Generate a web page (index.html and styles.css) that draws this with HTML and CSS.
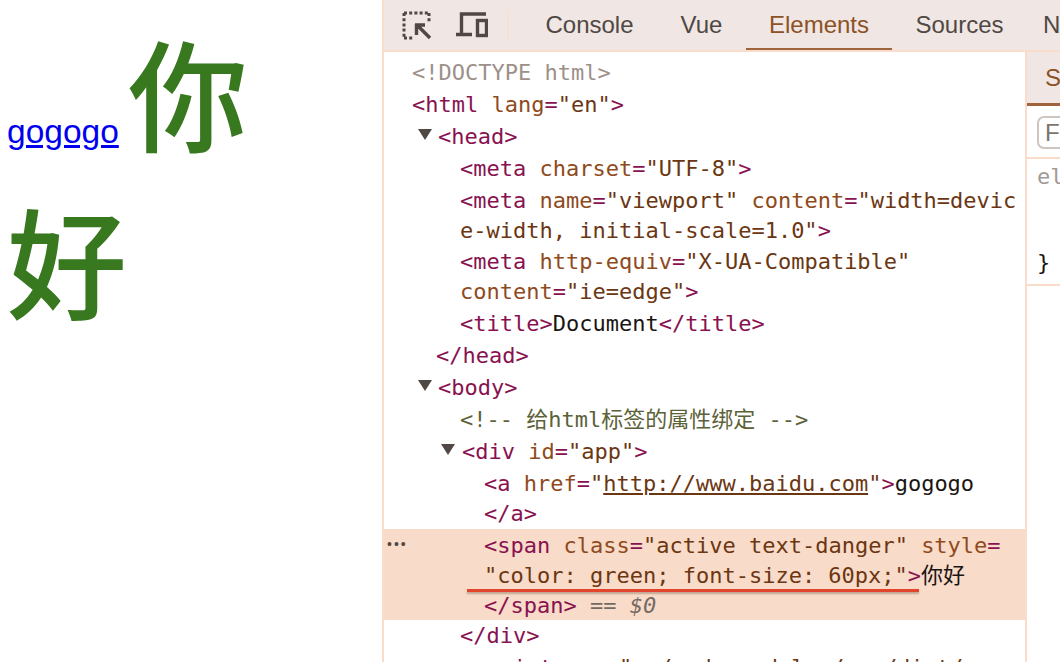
FILE: index.html
```html
<!DOCTYPE html>
<html lang="zh-CN">
<head>
<meta charset="UTF-8">
<title>Document</title>
<link rel="stylesheet" href="styles.css">
</head>
<body>
<main class="page"><a class="link" href="#">gogogo</a> <span class="big">你好</span></main>
<section class="devtools">
  <header class="toolbar">
    <svg class="tool tool-inspect" width="30" height="30" viewBox="0 0 30 30" fill="none" stroke="#4f4844">
      <path d="M2 3h25M2 3v25M27 3v9M2 28h9" stroke-width="3" stroke-dasharray="3 2.200"/>
      <path d="M13 15h10M14.500 14v11M15 15l13 13" stroke-width="3.400"/>
    </svg>
    <svg class="tool tool-device" width="32" height="26" viewBox="0 0 32 26" fill="none" stroke="#4f4844" stroke-width="3.400">
      <path d="M30 2H5.500v20M0 22.500h16"/>
      <rect x="21.500" y="8.500" width="9" height="15"/>
    </svg>
    <span class="divider"></span>
    <nav class="tabs">
      <span class="tab tab-console">Console</span>
      <span class="tab tab-vue">Vue</span>
      <span class="tab tab-elements">Elements</span>
      <span class="tab tab-sources">Sources</span>
      <span class="tab tab-network">Network</span>
    </nav>
  </header>
  <div class="panes">
    <div class="dom">
      <div class="row r32 i0"><span class="dt">&lt;!DOCTYPE html&gt;</span></div>
      <div class="row r32 i0"><span class="t">&lt;html</span> <span class="a">lang</span><span class="t">=</span><span class="v">"en"</span><span class="t">&gt;</span></div>
      <div class="row r32 i1"><i class="arrow"></i><span class="t">&lt;head&gt;</span></div>
      <div class="row r32 i2"><span class="t">&lt;meta</span> <span class="a">charset</span><span class="t">=</span><span class="v">"UTF-8"</span><span class="t">&gt;</span></div>
      <div class="row r30 i2"><span class="t">&lt;meta</span> <span class="a">name</span><span class="t">=</span><span class="v">"viewport"</span> <span class="a">content</span><span class="t">=</span><span class="v">"width=devic</span></div>
      <div class="row r31 i2"><span class="v">e-width, initial-scale=1.0"</span><span class="t">&gt;</span></div>
      <div class="row r30 i2"><span class="t">&lt;meta</span> <span class="a">http-equiv</span><span class="t">=</span><span class="v">"X-UA-Compatible"</span></div>
      <div class="row r32 i2"><span class="a">content</span><span class="t">=</span><span class="v">"ie=edge"</span><span class="t">&gt;</span></div>
      <div class="row r32 i2"><span class="t">&lt;title&gt;</span>Document<span class="t">&lt;/title&gt;</span></div>
      <div class="row r32 i1b"><span class="t">&lt;/head&gt;</span></div>
      <div class="row r32 i1"><i class="arrow"></i><span class="t">&lt;body&gt;</span></div>
      <div class="row r32 i2"><span class="c">&lt;!-- 给html标签的属性绑定 --&gt;</span></div>
      <div class="row r32 i2 has-arrow"><i class="arrow"></i><span class="t">&lt;div</span> <span class="a">id</span><span class="t">=</span><span class="v">"app"</span><span class="t">&gt;</span></div>
      <div class="row r30 i3"><span class="t">&lt;a</span> <span class="a">href</span><span class="t">=</span><span class="v">"<u>http://www.baidu.com</u>"</span><span class="t">&gt;</span>gogogo</div>
      <div class="row r30 i3"><span class="t">&lt;/a&gt;</span></div>
      <div class="selected">
        <span class="dots">•••</span>
        <div class="row r30 i3"><span class="t">&lt;span</span> <span class="a">class</span><span class="t">=</span><span class="v">"active text-danger"</span> <span class="a">style</span><span class="t">=</span></div>
        <div class="row r30 i3"><span class="v">"color: green; font-size: 60px;"</span><span class="t">&gt;</span>你好</div>
        <div class="row r30 i3"><span class="t">&lt;/span&gt;</span> <span class="eq">==</span> <em class="eq">$0</em></div>
        <span class="mark"></span>
      </div>
      <div class="row r32 i2"><span class="t">&lt;/div&gt;</span></div>
      <div class="row r32 i2"><span class="t">&lt;script</span> <span class="a">src</span><span class="t">=</span><span class="v">"<u>../node_modules/vue/dist/v</u></span></div>
    </div>
    <aside class="side">
      <div class="side-tabs"><span class="side-tab">Styles</span></div>
      <div class="filter"><span class="filter-box">Filter</span></div>
      <div class="rule">
        <div class="sel">element.style {</div>
        <div class="close">}</div>
      </div>
    </aside>
  </div>
</section>
</body>
</html>
```
FILE: styles.css
```css
* { box-sizing: border-box; }
html, body { margin: 0; height: 100%; overflow: hidden; }
body { display: flex; width: 1060px; height: 662px; background: #fff; }

.page {
  width: 382px;
  flex: none;
  padding: 0 120px 0 7px;
  font-family: "Liberation Sans", Arial, sans-serif;
  font-size: 33.500px;
  line-height: 1;
  margin-top: 7px;
}
.link { color: #0000ee; text-decoration: underline; }
.big {
  color: #38781f;
  font-size: 120px;
  line-height: 168px;
  font-weight: 500;
  font-family: "Noto Sans CJK SC", sans-serif;
}

.devtools {
  flex: 1;
  min-width: 0;
  border-left: 2px solid #fadccb;
  display: flex;
  flex-direction: column;
}
.toolbar {
  height: 52px;
  flex: none;
  background: #f0e6e3;
  border-bottom: 2px solid #fadccb;
  display: flex;
  align-items: center;
  overflow: hidden;
  font-family: "Liberation Sans", Arial, sans-serif;
  font-size: 24px;
  color: #4f4844;
}
.tool { flex: none; }
.tool-inspect { margin-left: 18px; }
.tool-device { margin-left: 24px; }
.divider { width: 2px; height: 32px; background: #f8e0d2; margin-left: 19px; flex: none; }
.tabs { display: flex; height: 52px; margin-left: 13px; flex: none; }
.tab { padding-top: 1px; line-height: 50px; white-space: nowrap; text-align: center; flex: none; }
.tab-console { width: 135px; }
.tab-vue { width: 89px; }
.tab-sources { width: 135px; }
.tab-network { width: 120px; }
.tab-elements {
  width: 146px;
  color: #8b5226;
  box-shadow: inset 0 -3px 0 #a0643c;
  height: 52px;
}

.panes { flex: 1; display: flex; min-height: 0; }
.dom {
  width: 641px;
  flex: none;
  padding-top: 6px;
  overflow: hidden;
  font-family: "DejaVu Sans Mono", "Noto Sans CJK SC", monospace;
  font-size: 22px;
  color: #1a1512;
}
.row { white-space: pre; padding-left: var(--indent); }
.r30 { height: 30px; line-height: 30px; }
.r31 { height: 31px; line-height: 30px; }
.r32 { height: 32px; line-height: 30px; }
.i0 { --indent: 28px; }
.i1 { --indent: 54px; }
.i1b { --indent: 52px; }
.i2 { --indent: 76px; }
.i3 { --indent: 100px; }
.i1, .has-arrow { position: relative; }
.has-arrow { --indent: 78px; }
.arrow {
  position: absolute;
  left: 34px;
  top: 7px;
  width: 0;
  height: 0;
  border-left: 7.500px solid transparent;
  border-right: 7.500px solid transparent;
  border-top: 11px solid #4f4844;
}
.has-arrow .arrow { left: 57px; }
.dt { color: #9c9089; }
.t { color: #881250; }
.a { color: #8f4a1d; }
.v { color: #6b3612; }
.c { color: #5c6238; }
.eq { color: #756a63; }
.selected {
  position: relative;
  background: #f9dbc9;
  height: 91px;
  margin-bottom: 1px;
  padding-top: 2px;
}
.selected .row { line-height: 30px; }
.dots {
  position: absolute;
  left: 3px;
  top: 0;
  line-height: 30px;
  font-family: "Liberation Sans", Arial, sans-serif;
  font-size: 14px;
  letter-spacing: 2px;
  color: #4f4844;
}
.mark {
  position: absolute;
  left: 83px;
  top: 60px;
  width: 452px;
  height: 3px;
  background: #e2452b;
  box-shadow: 0 2px 2px rgba(90, 60, 40, .35);
}

.side {
  flex: 1;
  min-width: 0;
  overflow: hidden;
  border-left: 2px solid #fadccb;
  display: flex;
  flex-direction: column;
  white-space: nowrap;
}
.side-tabs {
  height: 54px;
  flex: none;
  background: #f0e6e3;
  box-shadow: inset 0 -3px 0 #a0643c;
  font-family: "Liberation Sans", Arial, sans-serif;
  font-size: 24px;
  line-height: 52px;
  color: #8b5226;
  padding-left: 18px;
}
.filter { height: 53px; flex: none; padding: 10px 0 0 10px; border-bottom: 2px solid #fadccb; }
.filter-box {
  display: block;
  width: 80px;
  height: 33px;
  border: 2px solid #cfc5bf;
  border-radius: 7px;
  padding-left: 6px;
  font-family: "Liberation Sans", Arial, sans-serif;
  font-size: 24px;
  line-height: 29px;
  color: #7d746e;
}
.rule {
  height: 127px;
  flex: none;
  border-bottom: 2px solid #fadccb;
  padding: 3px 0 0 10px;
  font-family: "DejaVu Sans Mono", monospace;
  font-size: 22px;
  line-height: 30px;
}
.sel { color: #a29a95; }
.close { margin-top: 56px; color: #1a1512; }
```
